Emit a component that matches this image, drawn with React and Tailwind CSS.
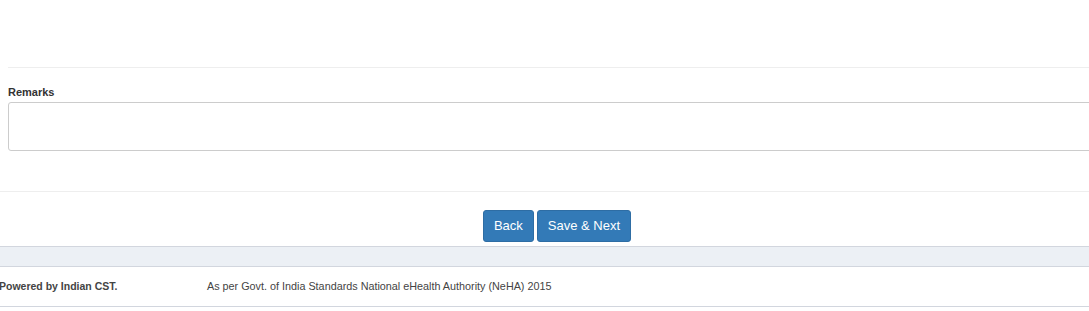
export default function App() {
  return (
    <div className="w-[1089px] h-[311px] overflow-hidden bg-white text-[#333]" style={{ fontFamily: '"Liberation Sans", Arial, sans-serif' }}>
      <div className="h-[67px]" />
      <div className="pl-[8px]">
        <div className="border-t border-[#eeeeee]" />
      </div>
      <div className="pl-[8px] pt-[17px]">
        <div className="text-[11px] font-bold leading-[14px] text-[#333]">Remarks</div>
        <div className="mt-[3px] h-[49px] w-[1120px] rounded-[3px] border border-[#cccccc] bg-white" />
      </div>
      <div className="h-[40px]" />
      <div className="border-t border-[#eeeeee]" />
      <div className="flex justify-center gap-[3px] pt-[18px] pl-[25px]">
        <button className="h-[32px] rounded-[3px] border border-[#2e6da4] bg-[#337ab7] px-[10px] text-[13px] text-white">Back</button>
        <button className="h-[32px] rounded-[3px] border border-[#2e6da4] bg-[#337ab7] px-[10px] text-[13px] text-white">Save &amp; Next</button>
      </div>
      <div className="mt-[4px] h-[21px] border-y border-[#d2d6de] bg-[#ecf0f5]" />
      <div className="flex h-[40px] items-center border-b border-[#d2d6de] text-[#444]">
        <div className="w-[208px] -ml-[1px] text-[10.5px] font-bold">Powered by Indian CST.</div>
        <div className="text-[10.8px]">As per Govt. of India Standards National eHealth Authority (NeHA) 2015</div>
      </div>
    </div>
  );
}
